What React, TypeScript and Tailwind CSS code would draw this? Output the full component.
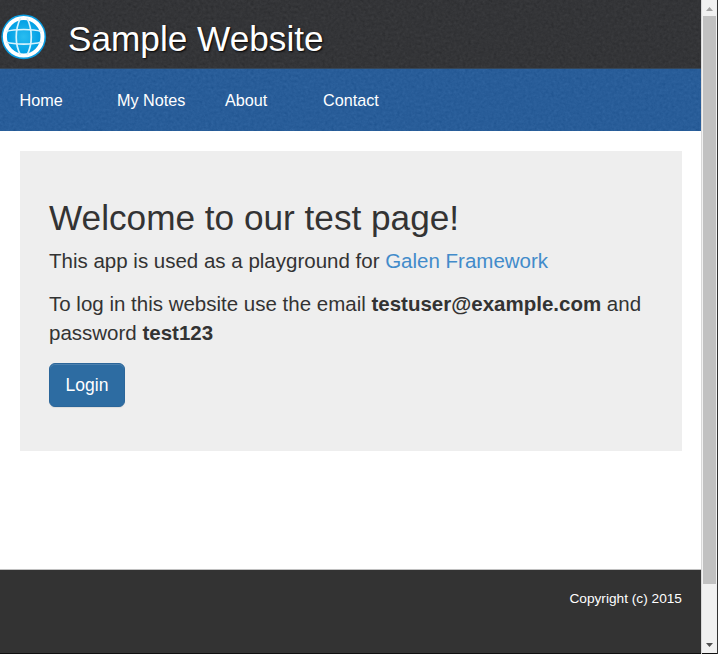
import React from 'react';

type GrainProps = { id: string; tone: string };

function Grain({ id, tone }: GrainProps) {
  return (
    <svg className={`pointer-events-none absolute inset-0 h-full w-full ${tone}`} aria-hidden="true">
      <filter id={id} x="0" y="0" width="100%" height="100%" colorInterpolationFilters="sRGB">
        <feTurbulence type="fractalNoise" baseFrequency="0.35" numOctaves="3" seed="4" />
        <feColorMatrix type="matrix" values="0.6 0.6 0.6 0 -0.4  0.6 0.6 0.6 0 -0.4  0.6 0.6 0.6 0 -0.4  0 0 0 0 1" />
      </filter>
      <rect width="100%" height="100%" filter={`url(#${id})`} />
    </svg>
  );
}

function Globe() {
  return (
    <svg className="h-[46px] w-[46px] shrink-0" viewBox="0 0 46 46" fill="none">
      <defs>
        <radialGradient id="sea">
          <stop offset="0" stopColor="#2abdf0" />
          <stop offset="0.700" stopColor="#04a2e6" />
          <stop offset="1" stopColor="#0a9be0" />
        </radialGradient>
      </defs>
      <circle cx="22.700" cy="22.800" r="22.400" fill="url(#sea)" />
      <circle cx="22.700" cy="22.800" r="18.800" stroke="#fff" strokeWidth="4" />
      <g stroke="#d8f3fd" strokeWidth="1.700">
        <path d="M19.500 4C13.800 16 13.800 30 19.500 41" />
        <path d="M26 4C31.700 16 31.700 30 26 41" />
        <path d="M5 17.500C14 14.800 31.500 14.800 40.500 17.500" />
        <path d="M5 28C14 30.800 31.500 30.800 40.500 28" />
      </g>
    </svg>
  );
}

const links = [
  { label: 'Home', width: 'w-[97.500px]' },
  { label: 'My Notes', width: 'w-[108px]' },
  { label: 'About', width: 'w-[98px]' },
  { label: 'Contact', width: 'w-[98px]' },
];

export default function App() {
  return (
    <div className="flex h-[654px] w-[718px] overflow-hidden bg-white font-['Liberation_Sans',Arial,sans-serif] text-[#333]">
      <div className="flex w-[701px] flex-col">
        <header className="relative flex h-[69px] items-start border-b border-[#35475a] bg-[#2f3033]">
          <Grain id="grain-dark" tone="opacity-[0.06]" />
          <div className="relative flex pt-[14px] pl-[1px]">
            <Globe />
            <h1 className="ml-[21px] pt-[5px] text-[35.200px] leading-[40px] text-white [text-shadow:1px_1px_2px_#000]">Sample Website</h1>
          </div>
        </header>
        <nav className="relative flex h-[62px] bg-[#235b9b]">
          <Grain id="grain-blue" tone="opacity-[0.06]" />
          <ul className="relative flex pt-[21px] pl-[19.500px] text-[16.200px] leading-[20px] text-white">
            {links.map((l) => (
              <li key={l.label} className={l.width}>
                <a>{l.label}</a>
              </li>
            ))}
          </ul>
        </nav>
        <main className="h-[438px] bg-white pt-[20px] pr-[19px] pl-[20px]">
          <section className="h-[300px] bg-[#eee] pt-[47px] pl-[29px] text-[20.500px] leading-[29px]">
            <h2 className="text-[35.200px] leading-[39px]">Welcome to our test page!</h2>
            <p className="mt-[9px]">
              This app is used as a playground for <a className="text-[#428bca]">Galen Framework</a>
            </p>
            <p className="mt-[14px] whitespace-nowrap">
              To log in this website use the email <b>testuser@example.com</b> and
              <br />
              password <b>test123</b>
            </p>
            <button className="mt-[16px] flex h-[44px] w-[76px] items-center justify-center rounded-[6px] border border-[#2b669a] bg-[#2d6ca2] text-[17.500px] leading-[24px] text-white shadow-[inset_0_1px_0_rgba(255,255,255,0.15),0_1px_1px_rgba(0,0,0,0.075)]">
              Login
            </button>
          </section>
        </main>
        <footer className="h-[85px] border-t border-b border-t-[#c0c0c0] border-b-[#111] bg-[#333] pt-[19px] pr-[19px] text-right text-[13.700px] leading-[19px] text-white">
          Copyright (c) 2015
        </footer>
      </div>
      <div className="flex w-[17px] flex-col border-r border-l border-r-[#333] border-l-[#d8d8d8] bg-[#f1f1f1]">
        <svg className="h-[16px] w-[15px]" viewBox="0 0 15 16">
          <path d="M4 11L7.500 7L11 11Z" fill="#a3a3a3" />
        </svg>
        <div className="ml-[1px] h-[568px] w-[13px] bg-[#c1c1c1]" />
        <div className="flex-1" />
        <svg className="h-[18px] w-[15px]" viewBox="0 0 15 18">
          <path d="M4 8L11 8L7.500 12Z" fill="#505050" />
        </svg>
        <div className="h-[1px] bg-[#111]" />
      </div>
    </div>
  );
}
